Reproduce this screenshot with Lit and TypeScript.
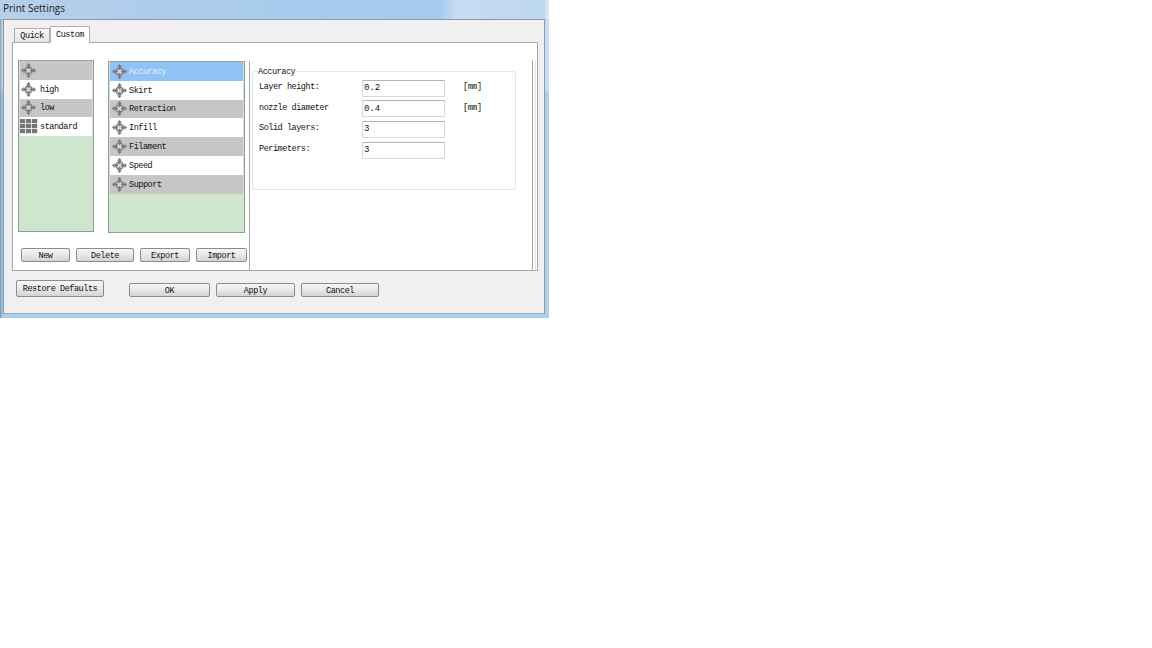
import { LitElement, html, css, svg } from "lit";
import { customElement } from "lit/decorators.js";

const gear = svg`<svg class="ic" width="15" height="15" viewBox="0 0 16 16">
  <path d="M8 0 L10.6 2.8 L5.4 2.8 Z M8 16 L10.6 13.2 L5.4 13.2 Z M0 8 L2.8 5.4 L2.8 10.6 Z M16 8 L13.2 5.4 L13.2 10.6 Z" fill="#777"/>
  <path d="M8 2.2 L13.8 8 L8 13.8 L2.2 8 Z" fill="#777"/>
  <circle cx="8" cy="8" r="4.4" fill="#7d7d7d"/>
  <path d="M6.4 5.2 L8 6.6 L9.6 5.2 L10.8 6.4 L9.4 8 L10.8 9.6 L9.6 10.8 L8 9.4 L6.4 10.8 L5.2 9.6 L6.6 8 L5.2 6.4 Z" fill="#d6d6d6"/>
</svg>`;

const grid = svg`<svg class="ic wide" width="18" height="15" viewBox="0 0 18 15">
  ${[0, 5, 10].map((y) => [0, 6, 12].map((x) => svg`<rect x=${x} y=${y} width="5.2" height="4.2" fill="#757575"/>`))}
</svg>`;

@customElement("app-root")
export class AppRoot extends LitElement {
  static styles = css`
    :host { display: block; width: 1152px; height: 648px; background: #fff; overflow: hidden;
      font-family: "Liberation Mono", "DejaVu Sans Mono", monospace; font-size: 8.5px; letter-spacing: -0.45px; color: #111; }
    .window { width: 549px; height: 318px; box-sizing: border-box; padding: 0 4px 4px 3px;
      background:
        linear-gradient(90deg, rgba(90,110,130,.55) 0, rgba(90,110,130,0) 3px),
        linear-gradient(180deg, #c8dff4 0, #c8dff4 90px, #aacff0 94px);
      display: flex; flex-direction: column; }
    .title { margin: 0 -4px 0 -3px; padding-left: 3px; height: 19px; flex: none; font: 10px/17px "Open Sans", "Noto Sans", sans-serif; color: #222; letter-spacing: 0;
      background: linear-gradient(90deg, #b6d0ea 0%, #a9cbec 45%, #a6caee 80%, #c6dcf2 83%, #bdd6ef 99%, #e4eef7 100%); }
    .dialog { flex: 1; background: #f0f0f0; border: 1px solid #8d9aa6; border-bottom-color: #9aa8b5; padding: 5px 6px 0 8px;
      display: flex; flex-direction: column; min-height: 0; }
    .tabs { display: flex; align-items: flex-end; height: 18px; padding-left: 2px; margin-bottom: -1px; position: relative; z-index: 1; }
    .tab { box-sizing: border-box; border: 1px solid #b0b0b0; border-bottom: none; display: flex; align-items: center; justify-content: center; }
    .tab.off { width: 36px; height: 15px; padding-top: 1px; background: linear-gradient(#f8f8f8, #e2e2e2); border-bottom: 1px solid #a8a8a8; }
    .tab.on { width: 40px; height: 17px; background: #fff; padding-bottom: 1px; }
    .pane { height: 229px; box-sizing: border-box; background: #fff; border: 1px solid #a8a8a8; display: flex; width: 526px; }
    .left { width: 236px; flex: none; box-sizing: border-box; padding: 17px 0 0 5px; }
    .lists { display: flex; align-items: flex-start; gap: 14px; }
    .list { box-sizing: border-box; background: #cde6cd; border: 1px solid #8f9f92; border-top-color: #9aa89c; padding: 0 1px; }
    .list.a { width: 76px; height: 172px; }
    .list.b { width: 137px; height: 172px; margin-top: 1px; }
    .row { height: 18.8px; display: flex; align-items: center; gap: 2px; padding-left: 2px; white-space: nowrap; }
    .row span { padding-top: 1px; }
    .row.g { background: #c6c6c6; }
    .row.w { background: #fff; }
    .row.s { background: #90c2f5; color: #eaf3fc; }
    .list.a .row { gap: 4px; padding-left: 1px; }
    .ic { flex: none; display: block; filter: blur(0.3px); }
    .row .wide { margin-left: -1px; margin-right: -2px; }
    .btns { display: flex; margin: 15px 0 0 3px; gap: 6px; }
    .btn { box-sizing: border-box; height: 14px; padding-top: 1px; border: 1px solid #8c8c8c; border-radius: 2px;
      background: linear-gradient(#f6f6f6, #e8e8e8 50%, #d4d4d4); display: flex; align-items: center; justify-content: center;
      white-space: nowrap; }
    .divider { width: 1px; flex: none; background: #a8a8a8; margin: 18px 0 0 0; }
    .settings { flex: 1; padding: 28px 0 0 2px; min-width: 0; }
    .rightline { width: 2px; flex: none; border-left: 1px solid #a8a8a8; border-right: 1px solid #e6e6e6; margin: 17px 1px 0 0; }
    fieldset { margin: 0; box-sizing: border-box; width: 264px; height: 119px; border: 1px solid #e2e6e6; border-radius: 3px;
      padding: 2px 0 0 6px; position: relative; }
    legend { background: #fff; padding: 0 1px 0 0; margin-left: -1px; position: absolute; top: -4px; line-height: 9px; }
    .form { display: grid; grid-template-columns: 103px 83px auto; grid-auto-rows: 20.6px; align-items: center; padding-top: 4px; }
    .lab { white-space: nowrap; margin-top: -2px; }
    .input { box-sizing: border-box; height: 17px; border: 1px solid #d8d8d8; border-top-color: #b4b4b4; padding-left: 1px;
      display: flex; align-items: center; font-size: 9px; letter-spacing: 0; }
    .unit { padding-left: 18px; margin-top: -2px; }
    .foot { display: flex; align-items: flex-start; padding: 9px 0 0 4px; }
    .foot .btn.rd { width: 88px; height: 17px; margin-right: 25px; padding-top: 0; }
    .foot .group { display: flex; gap: 6px; margin-top: 3px; }
    .foot .group .btn { height: 14px; }
  `;

  render() {
    const a: [string, string, boolean?][] = [["g", ""], ["w", "high"], ["g", "low"], ["w", "standard", true]];
    const b: [string, string][] = [["s", "Accuracy"], ["w", "Skirt"], ["g", "Retraction"], ["w", "Infill"], ["g", "Filament"], ["w", "Speed"], ["g", "Support"]];
    const fields: [string, string, string][] = [
      ["Layer height:", "0.2", "[mm]"],
      ["nozzle diameter", "0.4", "[mm]"],
      ["Solid layers:", "3", ""],
      ["Perimeters:", "3", ""],
    ];
    const btns: [string, number][] = [["New", 49], ["Delete", 58], ["Export", 50], ["Import", 51]];
    return html`<div class="window">
      <div class="title">Print Settings</div>
      <div class="dialog">
        <div class="tabs">
          <div class="tab off">Quick</div>
          <div class="tab on">Custom</div>
        </div>
        <div class="pane">
          <div class="left">
            <div class="lists">
              <div class="list a">
                ${a.map(([c, t, isGrid]) => html`<div class="row ${c}">${isGrid ? grid : gear}<span>${t}</span></div>`)}
              </div>
              <div class="list b">
                ${b.map(([c, t]) => html`<div class="row ${c}">${gear}<span>${t}</span></div>`)}
              </div>
            </div>
            <div class="btns">
              ${btns.map(([t, w]) => html`<div class="btn" style="width:${w}px">${t}</div>`)}
            </div>
          </div>
          <div class="divider"></div>
          <div class="settings">
            <fieldset>
              <legend>Accuracy</legend>
              <div class="form">
                ${fields.map(([l, v, u]) => html`<div class="lab">${l}</div><div class="input">${v}</div><div class="unit">${u}</div>`)}
              </div>
            </fieldset>
          </div>
          <div class="rightline"></div>
        </div>
        <div class="foot">
          <div class="btn rd">Restore Defaults</div>
          <div class="group">
            <div class="btn" style="width:81px">OK</div>
            <div class="btn" style="width:79px">Apply</div>
            <div class="btn" style="width:78px">Cancel</div>
          </div>
        </div>
      </div>
    </div>`;
  }
}
